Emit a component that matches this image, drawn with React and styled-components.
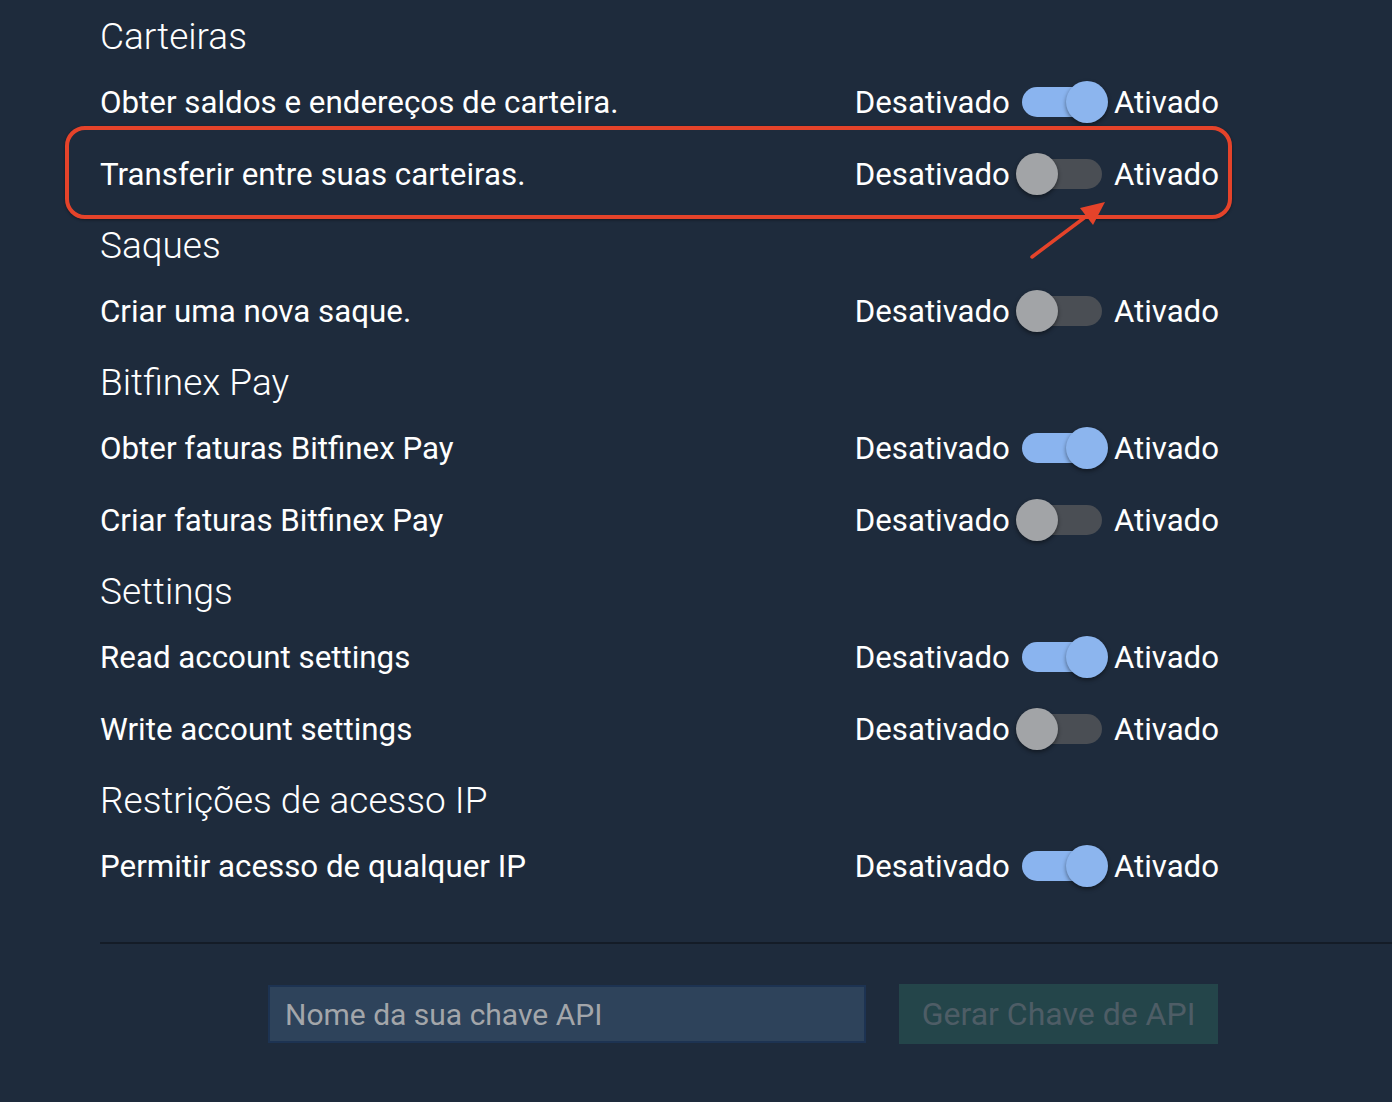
import React from 'react';
import styled, { createGlobalStyle } from 'styled-components';

const GlobalStyle = createGlobalStyle`
  body {
    margin: 0;
    background: #1e2b3c;
    font-family: Roboto, 'Liberation Sans', sans-serif;
    color: #ffffff;
  }
`;

const Page = styled.div`
  position: relative;
  min-height: 1102px;
  padding: 1px 0 0 100px;
  box-sizing: border-box;
  overflow: hidden;
`;

const Content = styled.div`
  width: 1119px;
`;

const Section = styled.section`
  margin-top: 5px;
`;

const Heading = styled.h2`
  margin: 0;
  height: 60px;
  display: flex;
  align-items: center;
  font-size: 37px;
  font-weight: 300;
  color: #ffffff;
`;

const Row = styled.div`
  height: 72px;
  display: flex;
  align-items: center;
  justify-content: space-between;
`;

const Label = styled.span`
  font-size: 31.3px;
  font-weight: 400;
`;

const ToggleGroup = styled.div`
  display: flex;
  align-items: center;
  font-size: 31.2px;
`;

const Switch = styled.div`
  position: relative;
  width: 92px;
  height: 42px;
  margin: 0 6px 0 6px;
`;

const Track = styled.div`
  position: absolute;
  left: 6px;
  right: 6px;
  top: 6px;
  bottom: 6px;
  border-radius: 15px;
  background: ${(p) => (p.$on ? '#8ab4ef' : '#4a4e54')};
`;

const Thumb = styled.div`
  position: absolute;
  top: 0;
  left: ${(p) => (p.$on ? '50px' : '0')};
  width: 42px;
  height: 42px;
  border-radius: 50%;
  background: ${(p) => (p.$on ? '#8cb5ee' : '#a2a4a7')};
  box-shadow: 0 2px 4px rgba(0, 0, 0, 0.45);
`;

const Divider = styled.hr`
  margin: 40px 0 0;
  border: none;
  height: 2px;
  background: #141c27;
`;

const Form = styled.div`
  width: 1118px;
  display: flex;
  justify-content: flex-end;
  align-items: center;
  gap: 33px;
  margin-top: 40px;
`;

const Input = styled.input`
  width: 598px;
  height: 58px;
  box-sizing: border-box;
  padding: 0 15px;
  background: #2e435b;
  border: 2px solid #1d3352;
  color: #ffffff;
  font-family: Roboto, 'Liberation Sans', sans-serif;
  font-size: 30px;
  outline: none;
  &::placeholder {
    color: #a3a6aa;
  }
`;

const Button = styled.button`
  width: 319px;
  height: 60px;
  border: none;
  background: #24454a;
  color: #4e5d66;
  font-family: Roboto, 'Liberation Sans', sans-serif;
  font-size: 32px;
`;

const Highlight = styled.div`
  position: absolute;
  left: 65px;
  top: 126px;
  width: 1167px;
  height: 93px;
  box-sizing: border-box;
  border: 4px solid #e5432a;
  border-radius: 20px;
  box-shadow: 0 1px 3px rgba(0, 0, 0, 0.4);
  pointer-events: none;
`;

const Arrow = styled.svg`
  position: absolute;
  left: 1020px;
  top: 195px;
  pointer-events: none;
`;

const sections = [
  {
    title: 'Carteiras',
    rows: [
      ['Obter saldos e endereços de carteira.', true],
      ['Transferir entre suas carteiras.', false],
    ],
  },
  { title: 'Saques', rows: [['Criar uma nova saque.', false]] },
  {
    title: 'Bitfinex Pay',
    rows: [
      ['Obter faturas Bitfinex Pay', true],
      ['Criar faturas Bitfinex Pay', false],
    ],
  },
  {
    title: 'Settings',
    rows: [
      ['Read account settings', true],
      ['Write account settings', false],
    ],
  },
  { title: 'Restrições de acesso IP', rows: [['Permitir acesso de qualquer IP', true]] },
];

const Toggle = ({ on }) => (
  <ToggleGroup>
    <span>Desativado</span>
    <Switch>
      <Track $on={on} />
      <Thumb $on={on} />
    </Switch>
    <span>Ativado</span>
  </ToggleGroup>
);

export default function App() {
  return (
    <>
      <GlobalStyle />
      <Page>
        <Content>
          {sections.map((s) => (
            <Section key={s.title}>
              <Heading>{s.title}</Heading>
              {s.rows.map(([label, on]) => (
                <Row key={label}>
                  <Label>{label}</Label>
                  <Toggle on={on} />
                </Row>
              ))}
            </Section>
          ))}
        </Content>
        <Divider />
        <Form>
          <Input placeholder="Nome da sua chave API" />
          <Button>Gerar Chave de API</Button>
        </Form>
        <Highlight />
        <Arrow width="100" height="70" viewBox="0 0 100 70">
          <line x1="12" y1="62" x2="76" y2="14" stroke="#e5432a" strokeWidth="3.5" strokeLinecap="round" />
          <polygon points="85,7 60,13 73,30" fill="#e5432a" />
        </Arrow>
      </Page>
    </>
  );
}
